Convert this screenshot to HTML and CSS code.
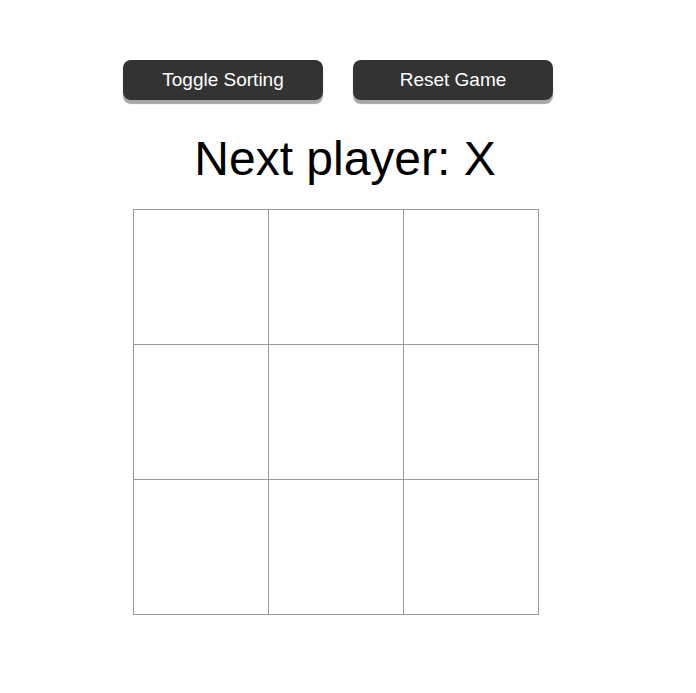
FILE: index.html
```html
<!DOCTYPE html>
<html lang="en">
<head>
  <meta charset="UTF-8">
  <title>Tic Tac Toe</title>
  <link rel="stylesheet" href="styles.css">
</head>
<body>
  <div class="game">
    <div class="controls">
      <button class="control-button">Toggle Sorting</button>
      <button class="control-button">Reset Game</button>
    </div>
    <div class="status">Next player: X</div>
    <div class="board">
      <button class="square"></button>
      <button class="square"></button>
      <button class="square"></button>
      <button class="square"></button>
      <button class="square"></button>
      <button class="square"></button>
      <button class="square"></button>
      <button class="square"></button>
      <button class="square"></button>
    </div>
  </div>
</body>
</html>
```

FILE: styles.css
```css
* {
  box-sizing: border-box;
}
body {
  margin: 0;
  background-color: #fff;
  font-family: "Liberation Sans", Arial, sans-serif;
}
.game {
  display: flex;
  flex-direction: column;
  align-items: center;
  padding-top: 60px;
}
.controls {
  display: flex;
  gap: 30px;
  padding-right: 20px;
}
.control-button {
  width: 200px;
  height: 40px;
  background-color: #333;
  color: #fff;
  border: none;
  border-radius: 8px;
  font-family: inherit;
  font-size: 19px;
  box-shadow: 0 4px 1px #a6a6a6;
  cursor: pointer;
}
.status {
  margin-top: 31px;
  padding-right: 6px;
  font-size: 48px;
  line-height: 55px;
  color: #000;
}
.board {
  margin-top: 23px;
  margin-right: 24px;
  display: grid;
  grid-template-columns: repeat(3, 134px);
  grid-template-rows: repeat(3, 134px);
  gap: 1px;
  padding: 1px;
  background-color: #999;
}
.square {
  background-color: #fff;
  border: none;
  padding: 0;
  cursor: pointer;
}
```
